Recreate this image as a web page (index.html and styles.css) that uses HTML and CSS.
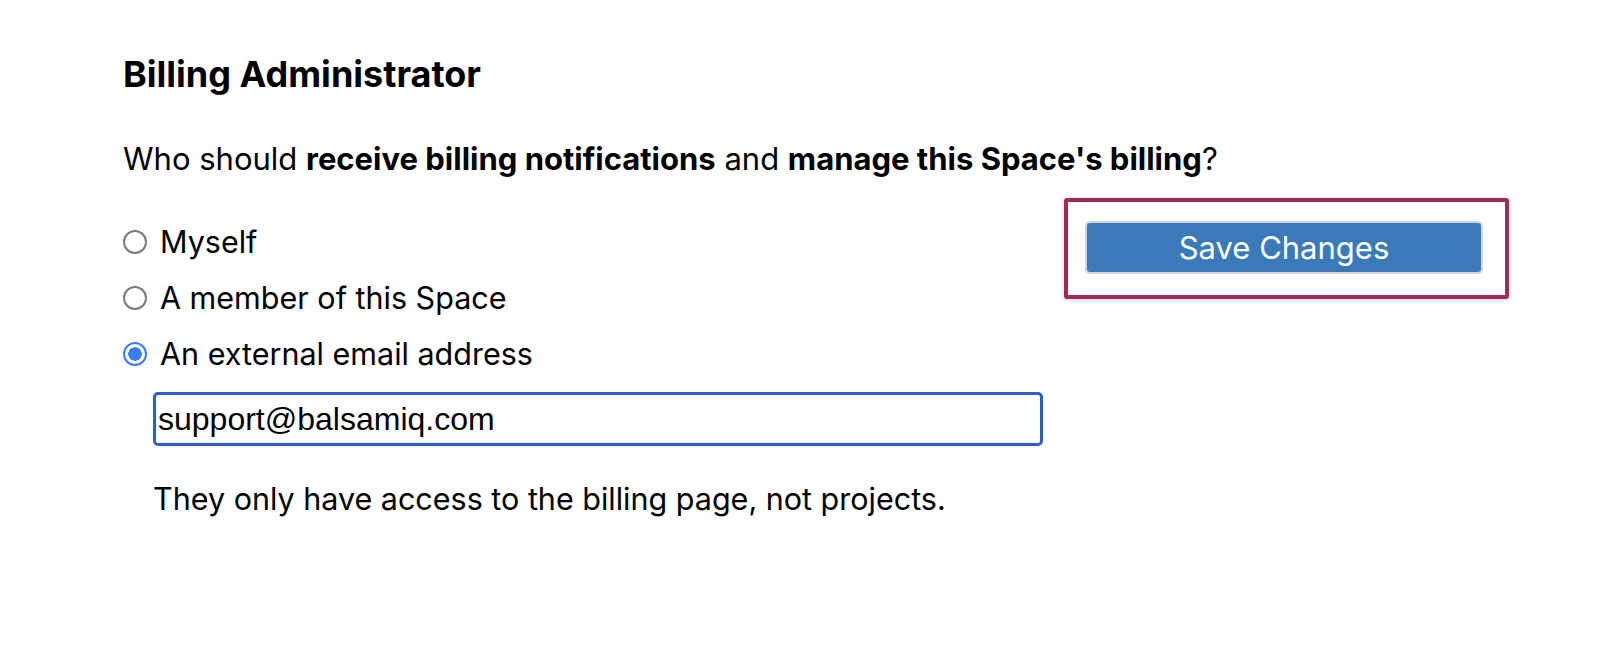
FILE: index.html
```html
<!DOCTYPE html>
<html lang="en">
<head>
<meta charset="utf-8">
<title>Billing Administrator</title>
<link rel="stylesheet" href="styles.css">
</head>
<body>
<main class="page">
  <h2 class="title">Billing Administrator</h2>
  <p class="question">Who should <strong>receive billing notifications</strong> and <strong>manage this Space's billing</strong>?</p>
  <div class="layout">
    <div class="options">
      <label class="option"><span class="radio"></span><span>Myself</span></label>
      <label class="option"><span class="radio"></span><span>A member of this Space</span></label>
      <label class="option"><span class="radio checked"></span><span>An external email address</span></label>
      <div class="email-wrap">
        <input class="email" type="text" value="support@balsamiq.com">
      </div>
      <p class="note">They only have access to the billing page, not projects.</p>
    </div>
    <div class="save-box">
      <button class="save" type="button">Save Changes</button>
    </div>
  </div>
</main>
</body>
</html>
```

FILE: styles.css
```css
* { box-sizing: border-box; }
html, body { margin: 0; background: #fff; }
body {
  font-family: "Inter", "Liberation Sans", sans-serif;
  color: #000;
}
.page {
  padding: 56px 0 0 123px;
}
.title {
  margin: 0;
  font-size: 36px;
  line-height: 36px;
  font-weight: 700;
}
.question {
  margin: 48px 0 0;
  font-size: 31px;
  line-height: 38px;
}
.question strong { font-weight: 700; }
.layout {
  display: flex;
  align-items: flex-start;
  gap: 21px;
  margin-top: 20px;
}
.options {
  width: 920px;
  padding-top: 26px;
  display: flex;
  flex-direction: column;
}
.option {
  display: flex;
  align-items: center;
  gap: 13px;
  font-size: 30.5px;
  line-height: 36px;
  height: 36px;
  margin-bottom: 20px;
}
.option:nth-child(3) { margin-bottom: 20px; }
.radio {
  width: 24px;
  height: 24px;
  border-radius: 50%;
  border: 2px solid #7a7a7a;
  background: #fff;
  flex: none;
}
.radio.checked {
  border: 2px solid #3b7df6;
  background: radial-gradient(circle, #3b7df6 0 6.5px, #fff 7px);
}
.email-wrap {
  padding-left: 30px;
}
.email {
  display: block;
  width: 890px;
  height: 54px;
  border: 3px solid #2b60c8;
  border-radius: 5px;
  padding: 0 2px;
  font-family: "Liberation Sans", Arial, sans-serif;
  font-size: 32px;
  color: #000;
  outline: none;
  background: #fff;
}
.note {
  margin: 35px 0 0 30px;
  font-size: 30.5px;
  line-height: 36px;
}
.save-box {
  width: 445px;
  height: 101px;
  border: 4px solid #a12b58;
  border-radius: 3px;
  box-shadow: 0 1px 5px rgba(0, 0, 0, 0.18);
  padding: 19px 22px 0 17px;
}
.save {
  display: block;
  width: 398px;
  height: 53px;
  background: #3a7ab8;
  border: 2px solid #d2d4d8;
  border-radius: 5px;
  color: #fff;
  font-family: "Inter", "Liberation Sans", sans-serif;
  font-size: 31px;
  line-height: 1;
  cursor: pointer;
}
```
